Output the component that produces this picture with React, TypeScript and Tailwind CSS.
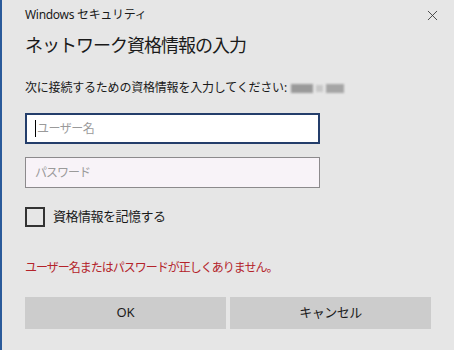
import { X } from 'lucide-react'

const font = { fontFamily: '"Noto Sans", "Noto Sans CJK JP", sans-serif' }

export default function App() {
  return (
    <div
      className="w-[454px] h-[350px] bg-[#e6e6e6] border-l-2 border-[#2a5a9a] text-[#1a1a1a] overflow-hidden"
      style={font}
    >
      <div className="h-[30px] flex items-center justify-between pl-[23px] pr-[13px]">
        <span className="text-[12px] tracking-[-0.3px]">Windows セキュリティ</span>
        <X className="w-[17px] h-[17px] text-[#333]" strokeWidth={1.2} />
      </div>
      <div className="pl-[23px] pr-[23px]">
        <h1 className="mt-[2px] text-[18px] leading-[26px] tracking-[-1px] font-normal">
          ネットワーク資格情報の入力
        </h1>
        <div className="mt-[21px] h-[18px] flex items-center text-[12px] tracking-[-0.2px]">
          <span>次に接続するための資格情報を入力してください:</span>
          <span className="ml-[4px] flex items-center gap-[3px] blur-[1px]">
            <span className="w-[22px] h-[9px] bg-[#9a9a9a]" />
            <span className="w-[7px] h-[7px] bg-[#c8c8c8]" />
            <span className="w-[18px] h-[9px] bg-[#a5a5a5]" />
          </span>
        </div>
        <div className="mt-[16px] w-[295px] h-[31px] bg-white border-2 border-[#243e6b] flex items-center pl-[8px]">
          <span className="w-px h-[17px] bg-black" />
          <span className="ml-px text-[12px] text-[#9a9a9a] tracking-[-0.5px]">ユーザー名</span>
        </div>
        <div className="mt-[13px] w-[295px] h-[31px] bg-[#f8f3f8] border border-[#8c8a8c] flex items-center pl-[9px]">
          <span className="text-[12px] text-[#9a9a9a] tracking-[-1px]">パスワード</span>
        </div>
        <label className="mt-[19px] h-[20px] flex items-center">
          <span className="w-[20px] h-[20px] border-2 border-[#333]" />
          <span className="ml-[8px] text-[13px] tracking-[-0.5px]">資格情報を記憶する</span>
        </label>
        <p className="mt-[32px] h-[18px] leading-[18px] text-[12px] text-[#b4232a] tracking-[-1px]">
          ユーザー名またはパスワードが正しくありません。
        </p>
        <div className="mt-[20px] grid grid-cols-2 gap-[4px] h-[32px] text-[13px]">
          <button className="bg-[#cccccc] flex items-center justify-center">OK</button>
          <button className="bg-[#cccccc] flex items-center justify-center tracking-[-0.5px]">キャンセル</button>
        </div>
      </div>
    </div>
  )
}
